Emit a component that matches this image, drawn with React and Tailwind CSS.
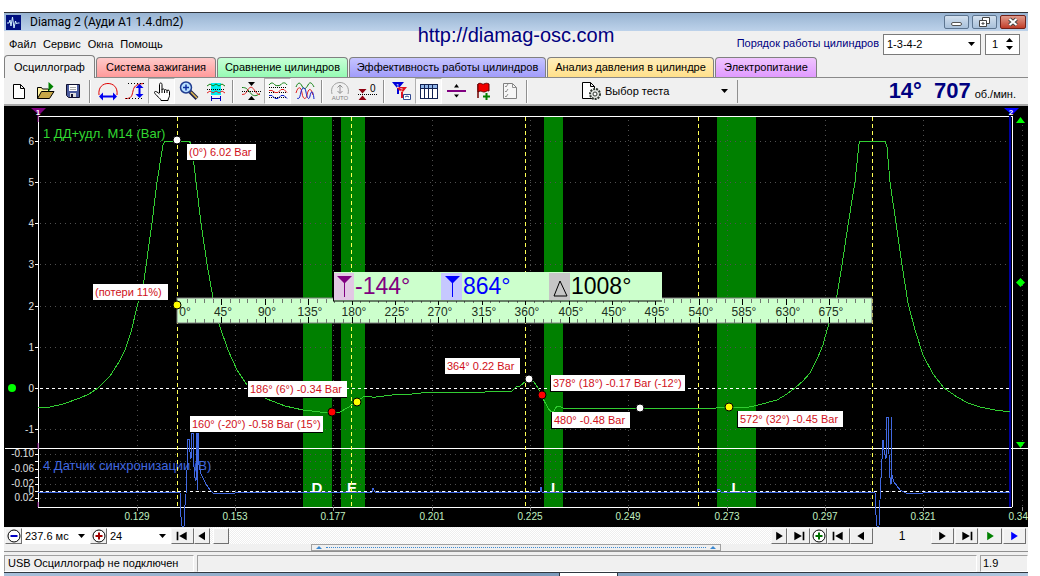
import React, { useState } from "react";

const tabs = [
  { name: "Осциллограф", style: "w-[91px]" },
  { name: "Система зажигания", style: "w-[120px] from-[#ffcaca] to-[#ff9a9a]" },
  { name: "Сравнение цилиндров", style: "w-[131px] from-[#c6ffd6] to-[#96fbb4]" },
  {
    name: "Эффективность работы цилиндров",
    style: "w-[197px] from-[#c6c4ff] to-[#a19cfa]",
  },
  {
    name: "Анализ давления в цилиндре",
    style: "w-[167px] from-[#ffeebb] to-[#ffe08a]",
  },
  { name: "Электропитание", style: "w-[102px] from-[#f0c4ff] to-[#e09aff]" },
];

const waveTop = "M2 6 C4 1 6 1 8 5 S12 8 14 4 S18 2 20 6";

const toolGroups = [
  [
    {
      label: "Новый",
      icon: <path d="M5.500 3.500h7l4 4v10h-11zM12.500 3.500v4h4" fill="#fff" stroke="#000" />,
    },
    {
      label: "Открыть",
      icon: (
        <>
          <path d="M2.500 17.500v-11h4l1 1.500h6v3" fill="#fff3a0" stroke="#000" />
          <path d="M2.500 17.500l4-7h12.500l-4.500 7z" fill="#c8a848" stroke="#000" />
          <path d="M13.500 1l5 4.500-5 5z" fill="#008000" />
        </>
      ),
    },
    {
      label: "Сохранить",
      icon: (
        <>
          <path d="M4.500 3.500h13v13h-11l-2-2z" fill="#4a5a9c" stroke="#101030" />
          <rect x="7" y="4" width="8" height="6" fill="#fff" />
          <path d="M8 6.500h6M8 8.500h6" stroke="#aaa" />
          <rect x="8" y="12" width="6" height="4" fill="#ddd" />
          <rect x="9" y="13" width="2" height="3" fill="#101030" />
        </>
      ),
    },
  ],
  [
    {
      label: "Масштаб по X",
      icon: (
        <>
          <path d="M2 14C1 6 6 2.500 11 2.500S21 6 20 14" stroke="#e00000" />
          <path d="M4 15.500h14" stroke="#0000f0" strokeWidth="2" />
          <path d="M2 15.500l4-4v8zM20 15.500l-4-4v8z" fill="#0000f0" />
        </>
      ),
    },
    {
      label: "Масштаб по Y",
      icon: (
        <>
          <path d="M1 17.500C8 18 8 14 9 10S11 3 20 2.500" stroke="#e00000" />
          <path d="M4 2.500h16M2 17.500h18" stroke="#000" strokeDasharray="1 2" />
          <path d="M15.500 6v8" stroke="#0000f0" strokeWidth="2" />
          <path d="M15.500 3l-4 4h8zM15.500 17l-4-4h8z" fill="#0000f0" />
        </>
      ),
    },
    {
      label: "Рука",
      active: true,
      icon: (
        <path
          d="M8.500 12V3.500c0-2 2.500-2 2.500 0V9c0-1.500 2.500-1.500 2.500.500 0-1.500 2.500-1 2.500.500 0-1.500 2.500-1 2.500.500v4c0 2-1.500 2.500-1.500 5h-7c0-2-5.500-5-6.500-8 0-2 2.500-1 5 1.500M11 9v3M13.500 9.500V12M16 10v2"
          fill="#fff"
          stroke="#000"
        />
      ),
    },
    {
      label: "Лупа",
      icon: (
        <>
          <path d="M12 10.500l7 7" stroke="#20244c" strokeWidth="4" />
          <path d="M13 11l6 6" stroke="#e0b850" strokeWidth="1.500" />
          <circle cx="8" cy="6.500" r="5.500" fill="#b8e0ff" stroke="#203c90" strokeWidth="1.500" />
          <path d="M5 6.500h6M8 3.500v6" stroke="#1030a0" strokeWidth="1.500" />
        </>
      ),
    },
    {
      label: "Фрагмент",
      icon: (
        <>
          <rect x="6" y="2" width="10" height="12" fill="#00f0f0" />
          <path d="M2 5l3-2 3 2 3-2 3 2 3-2 3 2" stroke="#108010" />
          <path d="M2 8.500h18" stroke="#000" strokeDasharray="1 1" />
          <path d="M2 12l3-2 3 2 3-2 3 2 3-2 3 2" stroke="#e02020" />
          <path d="M7 17.500h8M6.500 15v5M15.500 15v5" stroke="#0000c0" />
        </>
      ),
    },
  ],
  [
    {
      label: "Совместить",
      icon: (
        <>
          <path d="M2 6.500c4 0 5 1 8 5s6 4 10 1" stroke="#108010" />
          <path d="M2 13.500c4 0 4-2 6-5s4-3 6 0 3 5 6 5" stroke="#e02020" />
          <path d="M2 10.500h19" stroke="#000" strokeDasharray="1 1" />
          <path d="M8 1h7l-3.500 4zM8 19h7l-3.500-4z" fill="#000" />
        </>
      ),
    },
    {
      label: "Разделить",
      active: true,
      icon: (
        <>
          <path d="M2 4c3-4 5-1 6 0s5 1 6-.500 4-3 6 .500" stroke="#108010" />
          <path d="M2 6.500h18M2 11.500h18M2 16.500h18" stroke="#000" strokeDasharray="1 1" />
          <path d="M2 9.500h3l3 2h3l3-3h3l3 3" stroke="#e02020" />
          <path d="M2 14.500h3l3 3h3l3-3h3l3 3" stroke="#1020d0" />
        </>
      ),
    },
    {
      label: "Наложить",
      icon: (
        <>
          <path d={waveTop} stroke="#108010" />
          <path d="M2 12c2-7 5-7 6 0s4 7 5 2 3-8 5-3l1 3" stroke="#e02020" />
          <path d="M3 17c2 2 3-1 4-6s4-6 5 0 3 9 4 4 3-7 4 3" stroke="#1020d0" />
        </>
      ),
    },
  ],
  [
    {
      label: "Авто",
      icon: (
        <>
          <path d="M3 13C1 6 6 1.500 11 1.500S21 6 19 13" stroke="#a0a0a0" />
          <path d="M11 4v8M8.500 6.500L11 4l2.500 2.500M8.500 10l2.500 2.500 2.500-2.500" stroke="#909090" />
          <text x="11" y="19" textAnchor="middle" fontSize="6" fill="#808080">
            AUTO
          </text>
        </>
      ),
    },
    {
      label: "Ноль",
      icon: (
        <>
          <path d="M2 13.500h19" stroke="#000" strokeDasharray="1 1" />
          <path d="M2.500 8h8l-4 4.500zM2.500 19h8l-4-4.500z" fill="#900010" />
          <text x="14" y="11" fontSize="10" fill="#000">
            0
          </text>
        </>
      ),
    },
  ],
  [
    {
      label: "Маркеры",
      icon: (
        <>
          <path d="M1 1h12l-5 6v6h-2V7z" fill="#0000d8" />
          <path d="M5 6h11l-4 5v6h-2v-6z" fill="#e01020" />
          <text x="5" y="7" fontSize="6" fill="#fff">
            1
          </text>
          <text x="9" y="11" fontSize="5" fill="#fff">
            2
          </text>
          <path d="M12.500 13.500h7v5h-7zM14 16l2-1 2 1" fill="#fff" stroke="#304890" />
        </>
      ),
    },
    {
      label: "Таблица",
      active: true,
      icon: (
        <>
          <rect x="2.500" y="3.500" width="17" height="14" fill="#fff" stroke="#102050" />
          <rect x="3" y="4" width="16" height="3" fill="#8fb4e8" />
          <path d="M2.500 7.500h17M6.500 4v13M10.500 4v13M14.500 4v13" stroke="#102050" />
        </>
      ),
    },
    {
      label: "Линия",
      icon: (
        <>
          <path d="M2 10h19" stroke="#800080" strokeWidth="2" />
          <path d="M9 6.500h5L11.500 3zM9 13.500h5l-2.500 3z" fill="#000" />
        </>
      ),
    },
    {
      label: "Добавить метку",
      icon: (
        <>
          <path d="M6 3v14" stroke="#700000" strokeWidth="1.500" />
          <path d="M6 3c3-2 4 1 6 0s3-1 5 0v7c-2-1-3 1-5 1s-3-2-6 0z" fill="#f00000" stroke="#600000" />
          <path d="M14.500 12v7M11 15.500h7" stroke="#008000" strokeWidth="2" />
        </>
      ),
    },
    {
      label: "Отчёт",
      icon: (
        <>
          <path d="M4.500 2.500h9l4 4v11h-13z" fill="#f6f6f6" stroke="#808080" />
          <path d="M13.500 2.500v4h4M6 5l1 1 2-3M6 10l1 1 2-3M6 15l1 1 2-3" stroke="#909090" />
        </>
      ),
    },
  ],
];

const Icon = ({ children }) => (
  <svg viewBox="0 0 22 20" className="h-5 w-[22px] shrink-0" fill="none">
    {children}
  </svg>
);

const TitleBar = () => (
  <div className="flex h-[19px] items-center border-t border-[#30343a] bg-linear-to-b from-[#98b4d2] to-[#bdd2ea] pr-[2px] pl-[2px]">
    <svg viewBox="0 0 15 15" className="h-[15px] w-[15px]" fill="none">
      <rect width="15" height="15" fill="#001080" />
      <path d="M1 8h2l1-3 1 6 1.500-9 1.500 11 1.500-7 1 3 1-1h2" stroke="#d0f0ff" />
    </svg>
    <h1 className="ml-[9px] flex-1 font-['Roboto',sans-serif] text-xs leading-4 text-black">
      Diamag 2 (Ауди А1 1.4.dm2)
    </h1>
    <div className="flex gap-[3px]">
      <button
        aria-label="Свернуть"
        className="flex h-[14px] w-[25px] items-center justify-center rounded-xs border border-[#5d7590] bg-linear-to-b from-[#d3e0ee] to-[#a8c0da]"
      >
        <span className="mt-1 h-1 w-[11px] rounded-xs border border-[#555] bg-white"></span>
      </button>
      <button
        aria-label="Восстановить"
        className="flex h-[14px] w-[25px] items-center justify-center rounded-xs border border-[#5d7590] bg-linear-to-b from-[#d3e0ee] to-[#a8c0da]"
      >
        <svg viewBox="0 0 13 11" className="h-[11px] w-[13px]" fill="#fff" stroke="#444">
          <path d="M4.500 .500h7v6h-7z" />
          <path d="M1.500 3.500h7v6h-7zM4 6h2v1H4z" />
        </svg>
      </button>
      <button
        aria-label="Закрыть"
        className="flex h-[14px] w-[26px] items-center justify-center rounded-xs border border-[#702018] bg-linear-to-b from-[#e09a8c] to-[#c03c28]"
      >
        <svg viewBox="0 0 12 10" className="h-[10px] w-3">
          <path d="M2.500 2l7 6M9.500 2l-7 6" stroke="#444" strokeWidth="4" />
          <path d="M2.500 2l7 6M9.500 2l-7 6" stroke="#fff" strokeWidth="2" />
        </svg>
      </button>
    </div>
  </div>
);

const Arrow = ({ className }) => (
  <svg viewBox="0 0 7 4" className={`pointer-events-none h-1 w-[7px] ${className}`}>
    <path d="M0 0h7L3.500 4z" fill="#000" />
  </svg>
);

const DropDown = ({ label, options, className }) => (
  <div className={`relative ${className}`}>
    <select
      aria-label={label}
      className="block h-full w-full appearance-none bg-transparent pl-[3px] outline-none"
    >
      {options.map((item) => (
        <option key={item}>{item}</option>
      ))}
    </select>
    <Arrow className="absolute top-1/2 right-[5px] -translate-y-1/2" />
  </div>
);

const Header = ({ active, setActive }) => {
  const [cylinder, setCylinder] = useState(1);

  return (
    <div className="relative flex flex-col">
      <div className="flex h-6 items-center">
        <nav className="flex flex-1 gap-[7px] pt-[2px] pl-[5px] text-[11px]">
          {["Файл", "Сервис", "Окна", "Помощь"].map((item) => (
            <button key={item}>{item}</button>
          ))}
        </nav>
        <span className="mr-1 text-[11px] text-[#000080]">
          Порядок работы цилиндров
        </span>
        <DropDown
          label="Порядок работы цилиндров"
          options={["1-3-4-2", "1-2-4-3"]}
          className="mt-[2px] h-[21px] w-[98px] border border-[#7a7a7a] bg-white text-[11px]"
        />
        <div className="mt-[2px] mr-2 ml-1 flex h-[21px] w-[35px] items-center border border-[#7a7a7a] bg-white">
          <input
            type="text"
            aria-label="Цилиндр"
            value={cylinder}
            onChange={(e) => setCylinder(e.target.value)}
            className="w-5 pl-[6px] text-[11px] outline-none"
          />
          <div className="flex flex-col gap-1">
            <button aria-label="Больше" onClick={() => setCylinder(Number(cylinder) + 1)}>
              <Arrow className="rotate-180" />
            </button>
            <button aria-label="Меньше" onClick={() => setCylinder(Number(cylinder) - 1)}>
              <Arrow className="" />
            </button>
          </div>
        </div>
      </div>
      <div role="tablist" className="flex h-[23px] items-end gap-px border-b border-[#8a8a8a] text-[11px]">
        {tabs.map((tab, i) => (
          <button
            key={tab.name}
            role="tab"
            aria-selected={active == i}
            onClick={() => setActive(i)}
            className={`rounded-t border-x border-t border-[#808080] whitespace-nowrap ${tab.style} ${
              active == i ? "-mb-px h-[23px] bg-[#f0f0f0]" : "h-5 bg-linear-to-b"
            }`}
          >
            {tab.name}
          </button>
        ))}
      </div>
      <a
        href="http://diamag-osc.com"
        className="absolute -top-2 left-1/2 -translate-x-1/2 text-xl leading-6 text-[#000080]"
      >
        http://diamag-osc.com
      </a>
    </div>
  );
};

const ToolBar = () => (
  <div className="flex h-7 items-center border-b-2 border-[#a8a8a8] pl-px">
    {toolGroups.map((group, i) => (
      <React.Fragment key={i}>
        {group.map((tool) => (
          <button
            key={tool.label}
            aria-label={tool.label}
            className={`flex h-[26px] w-[27px] items-center justify-center ${
              tool.active
                ? "border border-[#b0b0b0] border-r-white border-b-white bg-[#f8f8f8]"
                : ""
            }`}
          >
            <Icon>{tool.icon}</Icon>
          </button>
        ))}
        <span className="mx-[3px] h-[23px] w-[2px] border-l border-[#909090] bg-white"></span>
      </React.Fragment>
    ))}
    <div className="ml-[49px] flex h-full items-center">
      <Icon>
        <path d="M2.500 1.500h8l4 4v12h-12zM10.500 1.500v4h4" fill="#fff" stroke="#000" />
        <circle cx="15" cy="13" r="5" fill="#e0e4e0" stroke="#303830" strokeWidth="2" strokeDasharray="2 1" />
        <circle cx="15" cy="13" r="2" fill="#fff" stroke="#303830" />
      </Icon>
      <DropDown
        label="Тест"
        options={["Выбор теста"]}
        className="h-6 w-[131px] text-[11px]"
      />
      <span className="ml-1 h-[23px] w-px bg-[#909090]"></span>
    </div>
    <div className="flex flex-1 items-baseline justify-end gap-1 pr-3 text-[#000080]">
      <span className="mr-2 text-[22px] leading-6 font-bold">14°</span>
      <span className="text-[22px] leading-6 font-bold">707</span>
      <span className="text-[11px] text-black">об./мин.</span>
    </div>
  </div>
);

const pressure =
  "38,407 50,407 63,404 80,398 89,394 98,388 110,376 119,362 125,350 131,332 138,303 144,280 152,223 157,182 163,145 165,141 189,141 192,145 194,165 197,190 201,223 207,264 213,298 219,324 228,350 237,370 247,385 257,394 267,399 285,406 303,410 320,412 333,413 340,412 347,408 357,402 363,397 370,396 374,398 378,396 384,396 400,394 412,394 430,392 440,393 448,392 470,392 480,393 490,391 512,391 516,387 520,386 526,381 529,379 534,382 538,388 541,395 548,408 551,412 554,411 557,406 560,406 564,409 575,408 584,408 590,409 597,408 605,409 640,408 716,408 729,407 745,408 758,405 777,400 787,394 795,388 803,381 810,373 818,357 823,345 827,330 833,310 837,295 842,265 848,225 855,182 859,144 860,141 885,141 887,147 890,182 896,223 902,265 908,303 915,330 923,355 933,374 944,388 957,397 968,403 980,407 995,410 1010,412";

const sync =
  "38,492 165,492 180,493 181,517 182,526 184,526 185,505 186,494 187,470 188,439 189,439 190,452 191,459 192,433 193,433 193,455 195,478 196,481 197,433 197,490 198,433 199,465 201,474 206,484 210,490 213,493 218,494 225,493 235,493 240,492 372,492 373,488 375,492 460,492 462,493 464,492 540,492 541,487 542,492 717,492 718,489 720,490 721,492 850,492 875,493 876,515 877,526 879,526 880,500 881,478 883,440 884,450 886,459 887,417 888,417 888,430 890,478 891,484 891,417 892,475 894,482 900,490 908,494 923,493 940,492 1010,492";

const gridX = [137, 235, 333, 432, 530, 628, 727, 825, 923, 1022];
const timeLabels = ["0.129", "0.153", "0.177", "0.201", "0.225", "0.249", "0.273", "0.297", "0.321"];
const bands = [
  { x: 303, w: 29, mark: "D", tx: 317 },
  { x: 341, w: 24, mark: "E", tx: 352 },
  { x: 544, w: 19, mark: "I", tx: 553 },
  { x: 717, w: 39, mark: "L", tx: 736 },
];
const lowerScale = [
  { y: 454, text: "-0.10" },
  { y: 461 },
  { y: 469, text: "-0.06" },
  { y: 477 },
  { y: 484, text: "-0.02" },
  { y: 491, text: "0" },
  { y: 498, text: "0.02" },
];
const callouts = [
  { x: 187, y: 144, w: 69, text: "(0°) 6.02 Bar" },
  { x: 93, y: 284, w: 75, text: "(потери 11%)" },
  { x: 248, y: 381, w: 99, text: "186° (6°) -0.34 Bar" },
  { x: 190, y: 416, w: 133, text: "160° (-20°) -0.58 Bar (15°)" },
  { x: 445, y: 358, w: 75, text: "364° 0.22 Bar" },
  { x: 551, y: 375, w: 134, text: "378° (18°) -0.17 Bar (-12°)" },
  { x: 552, y: 412, w: 78, text: "480° -0.48 Bar" },
  { x: 738, y: 411, w: 105, text: "572° (32°) -0.45 Bar" },
];
const dots = [
  { x: 177, y: 140, color: "#fff" },
  { x: 177, y: 305, color: "#ff0" },
  { x: 332, y: 412, color: "#f00" },
  { x: 357, y: 402, color: "#ff0" },
  { x: 529, y: 379, color: "#fff" },
  { x: 542, y: 395, color: "#f00" },
  { x: 640, y: 408, color: "#fff" },
  { x: 729, y: 407, color: "#ff0" },
];

const Ruler = () => {
  const ticks = Array.from({ length: 79 }, (_, i) => i + 1);
  return (
    <g>
      <rect x="177" y="298" width="695" height="25" fill="#ccffcc" stroke="#808080" />
      {ticks.map((i) => {
        const x = Math.round(178 + i * 8.68);
        const major = i % 5 == 0;
        const len = major ? 6 : 4;
        return (
          <path
            key={i}
            d={`M${x} 299v${len}M${x} 323v-${len}`}
            stroke={major ? "#000" : "#707870"}
            shapeRendering="crispEdges"
          />
        );
      })}
      {Array.from({ length: 16 }, (_, i) => (
        <text
          key={i}
          x={i == 0 ? 185 : Math.round(180 + i * 43.4)}
          y="316"
          fontSize="12"
          textAnchor="middle"
          fill="#203020"
        >
          {i * 45}°
        </text>
      ))}
    </g>
  );
};

const Readout = () => (
  <g fontSize="23">
    <rect x="333" y="272" width="329" height="29" fill="#000" />
    <rect x="334" y="272" width="328" height="29" fill="#ccffcc" />
    <path d="M333 301h329" stroke="#000" />
    <rect x="334" y="273" width="20" height="27" fill="#e2c8e4" />
    <rect x="441" y="273" width="21" height="27" fill="#c6c8ff" />
    <rect x="549" y="273" width="21" height="27" fill="#c6c6c6" />
    <path d="M337 276h15l-7 7v14h-1v-14z" fill="#800080" />
    <path d="M445 276h15l-7 7v14h-1v-14z" fill="#0000ff" />
    <path d="M560 281l-6 15h13z" fill="none" stroke="#000" />
    <text x="355" y="294" fill="#800080">
      -144°
    </text>
    <text x="463" y="294" fill="#0000ff">
      864°
    </text>
    <text x="571" y="294" fill="#000">
      1008°
    </text>
  </g>
);

const Chart = () => (
  <svg
    viewBox="4 106 1024 421"
    className="block h-auto w-full bg-black font-['Liberation_Sans',Arial,sans-serif]"
    role="img"
    aria-label="Осциллограмма"
  >
    {bands.map((band) => (
      <rect key={band.x} x={band.x} y="117" width={band.w} height="390" fill="#008000" />
    ))}

    {/* grid */}
    <g stroke="#505050" strokeDasharray="1 4" shapeRendering="crispEdges">
      {gridX.map((x) => (
        <path key={x} d={`M${x} 120V507`} />
      ))}
      {[141, 182, 223, 264, 306, 347, 429].map((y) => (
        <path key={y} d={`M40 ${y}H1010`} />
      ))}
      {lowerScale.map((item) => (
        <path key={item.y} d={`M40 ${item.y}H1010`} />
      ))}
    </g>

    <g fontSize="13">
      <text x="43" y="138" fill="#32d832">
        1 ДД+удл. М14 (Bar)
      </text>
      <text x="43" y="470" fill="#4169e1">
        4 Датчик синхронизации (В)
      </text>
    </g>

    <g stroke="#fff" shapeRendering="crispEdges">
      <path d="M38 116H1012M38 116V507M1012 116V507M38 507H1012M5 448H1028" />
      <path d="M40 388H1010M40 491H1010" strokeDasharray="3 3" />
      {[141, 182, 223, 264, 306, 347, 388, 429].map((y) => (
        <path key={y} d={`M35 ${y}h4`} />
      ))}
      {lowerScale.map((item) => (
        <path key={item.y} d={`M35 ${item.y}h4`} />
      ))}
      {gridX.map((x) => (
        <path key={x} d={`M${x} 507v4`} stroke="#909090" />
      ))}
    </g>

    <g fontSize="10" fill="#e0e0e0" textAnchor="end">
      {[141, 182, 223, 264, 306, 347, 388, 429].map((y, i) => (
        <text key={y} x="34" y={y + 4}>
          {6 - i}
        </text>
      ))}
      {lowerScale.map((item) => (
        <text key={item.y} x="34" y={item.y + 3}>
          {item.text}
        </text>
      ))}
    </g>
    <g fontSize="10" fill="#c0f0c0" textAnchor="middle">
      {timeLabels.map((item, i) => (
        <text key={item} x={gridX[i]} y="520">
          {item}
        </text>
      ))}
      <text x="1028" y="520" textAnchor="end">
        0.34
      </text>
    </g>

    {bands.map((band) => (
      <text
        key={band.mark}
        x={band.tx}
        y="493"
        fontSize="15"
        fontWeight="bold"
        textAnchor="middle"
        fill="#fff"
      >
        {band.mark}
      </text>
    ))}

    <path d="M1010 116V507" stroke="#0000a0" strokeWidth="2" />
    <g stroke="#ffff55" strokeDasharray="4 3" shapeRendering="crispEdges">
      {[177, 351, 525, 698, 872].map((x) => (
        <path key={x} d={`M${x} 117V507`} />
      ))}
    </g>

    <polyline points={sync} fill="none" stroke="#4169e1" shapeRendering="crispEdges" />
    <polyline points={pressure} fill="none" stroke="#32cd32" shapeRendering="crispEdges" />

    {/* edge markers */}
    <path d="M38 112V122M38 443V449M38 502V507" stroke="#800080" />
    <path d="M31 108h15l-7 7z" fill="#800080" />
    <path d="M1004 108h15l-7 7z" fill="#0000ff" />
    <g fontSize="8" fontWeight="bold" fill="#fff" textAnchor="middle">
      <text x="38" y="115">
        1
      </text>
      <text x="1011" y="115">
        2
      </text>
    </g>
    <g fill="#00ff00">
      <circle cx="12" cy="388" r="4" />
      <path d="M1016 123h9l-4.500-6zM1016 442h9l-4.500 6zM1020.500 278l4.500 4.500-4.500 4.500-4.500-4.500z" />
    </g>

    <Ruler />
    <Readout />

    {callouts.map((item) => (
      <g key={item.text}>
        <rect x={item.x - 1} y={item.y} width={item.w + 1} height="17" fill="#000" />
        <rect x={item.x} y={item.y} width={item.w} height="16" fill="#fff" />
        <text x={item.x + 2} y={item.y + 12} fontSize="11" fill="#d01020">
          {item.text}
        </text>
      </g>
    ))}
    {dots.map((dot) => (
      <circle key={`${dot.x}-${dot.y}`} cx={dot.x} cy={dot.y} r="4" fill={dot.color} stroke="#000" />
    ))}
  </svg>
);

const glyphs = {
  prev: "M13 1v10L5 6z",
  next: "M6 1v10l8-5z",
  first: "M3 1h2v10H3zM15 1v10L6 6z",
  last: "M5 1v10l9-5zM15 1h2v10h-2z",
};

const NavButton = ({ glyph, label, color = "#000", className = "w-[23px]" }) => (
  <button
    aria-label={label}
    className={`flex h-4 items-center justify-center overflow-hidden border border-[#f8f8f8] border-r-[#707070] border-b-[#707070] bg-[#f0f0f0] ${className}`}
  >
    <svg viewBox="0 0 20 12" className="h-[10px] w-[17px] shrink-0">
      <path d={glyphs[glyph]} fill={color} />
    </svg>
  </button>
);

const ZoomButton = ({ label, color, plus }) => (
  <button
    aria-label={label}
    className="flex h-4 w-[17px] items-center justify-center border border-[#f8f8f8] border-r-[#707070] border-b-[#707070] bg-[#f0f0f0]"
  >
    <svg viewBox="0 0 14 14" className="h-[14px] w-[14px]">
      <circle cx="7" cy="7" r="6" fill="#fff" stroke="#000" />
      <path d={plus ? "M3.500 7h7M7 3.500v7" : "M3.500 7h7"} stroke={color} strokeWidth="2" />
    </svg>
  </button>
);

const ControlBar = () => (
  <div className="flex h-[17px] items-center pl-px text-[11px]">
    <ZoomButton label="Уменьшить" color="#0000c0" />
    <DropDown label="Развёртка" options={["237.6 мс"]} className="h-4 w-[68px] bg-white" />
    <ZoomButton label="Увеличить" color="#a00000" plus />
    <DropDown label="Деление" options={["24"]} className="h-4 w-[64px] bg-white" />
    <NavButton glyph="first" label="В начало" />
    <NavButton glyph="prev" label="Назад" className="w-4" />
    <div className="flex h-full flex-1 items-center bg-[repeating-conic-gradient(#ffffff_0_25%,#eeeeee_0_50%)] bg-[length:2px_2px] pl-[3px]">
      <span className="h-4 w-4 border border-white border-r-[#707070] border-b-[#707070] bg-[#f0f0f0]"></span>
    </div>
    <NavButton glyph="next" label="Вперёд" className="w-4" />
    <NavButton glyph="last" label="В конец" />
    <ZoomButton label="Добавить кадр" color="#007000" plus />
    <NavButton glyph="first" label="Первый кадр" />
    <NavButton glyph="prev" label="Предыдущий кадр" />
    <span className="w-[58px] text-center text-xs">1</span>
    <div className="flex gap-px pr-[2px]">
      <NavButton glyph="next" label="Следующий кадр" />
      <NavButton glyph="last" label="Последний кадр" />
      <NavButton glyph="next" label="Воспроизвести" color="#008000" />
      <NavButton glyph="next" label="Воспроизвести всё" color="#0000ff" />
    </div>
  </div>
);

const Splitter = () => (
  <div className="flex h-2 justify-center border-b border-[#909090]">
    <div className="flex w-2/5 items-center gap-1 border border-[#a0a0a0] px-1">
      <svg viewBox="0 0 6 3" className="h-[3px] w-[6px]">
        <path d="M3 0l3 3H0z" fill="#3c88d0" />
      </svg>
      <span className="flex-1 border-t border-dotted border-[#3c88d0]"></span>
      <svg viewBox="0 0 6 3" className="h-[3px] w-[6px]">
        <path d="M3 0l3 3H0z" fill="#3c88d0" />
      </svg>
    </div>
  </div>
);

const StatusBar = () => (
  <div className="flex h-5 gap-[3px] pt-[3px] text-[11px] leading-4">
    <span className="w-[190px] border border-[#a0a0a0] border-r-white border-b-white pl-[3px] leading-[14px]">
      USB Осциллограф не подключен
    </span>
    <span className="flex-1 border border-[#a0a0a0] border-r-white border-b-white"></span>
    <span className="w-12 border border-[#a0a0a0] border-r-white border-b-white pl-[2px] leading-[14px]">
      1.9
    </span>
  </div>
);

export default function App() {
  const [active, setActive] = useState(0);

  return (
    <div className="bg-white pt-3 pr-3 pl-1 font-['Liberation_Sans',Arial,sans-serif] text-black">
      <div className="bg-[#f0f0f0]">
        <TitleBar />
        <Header active={active} setActive={setActive} />
        <ToolBar />
        <Chart />
        <ControlBar />
        <Splitter />
        <StatusBar />
        <div className="flex h-1 justify-center border-t border-[#303840] bg-linear-to-r from-[#a8c0da] via-[#7898b8] to-[#b0c8e0]">
          <span className="ml-36 w-[59px] border-x border-[#303840] bg-white"></span>
        </div>
      </div>
    </div>
  );
}
